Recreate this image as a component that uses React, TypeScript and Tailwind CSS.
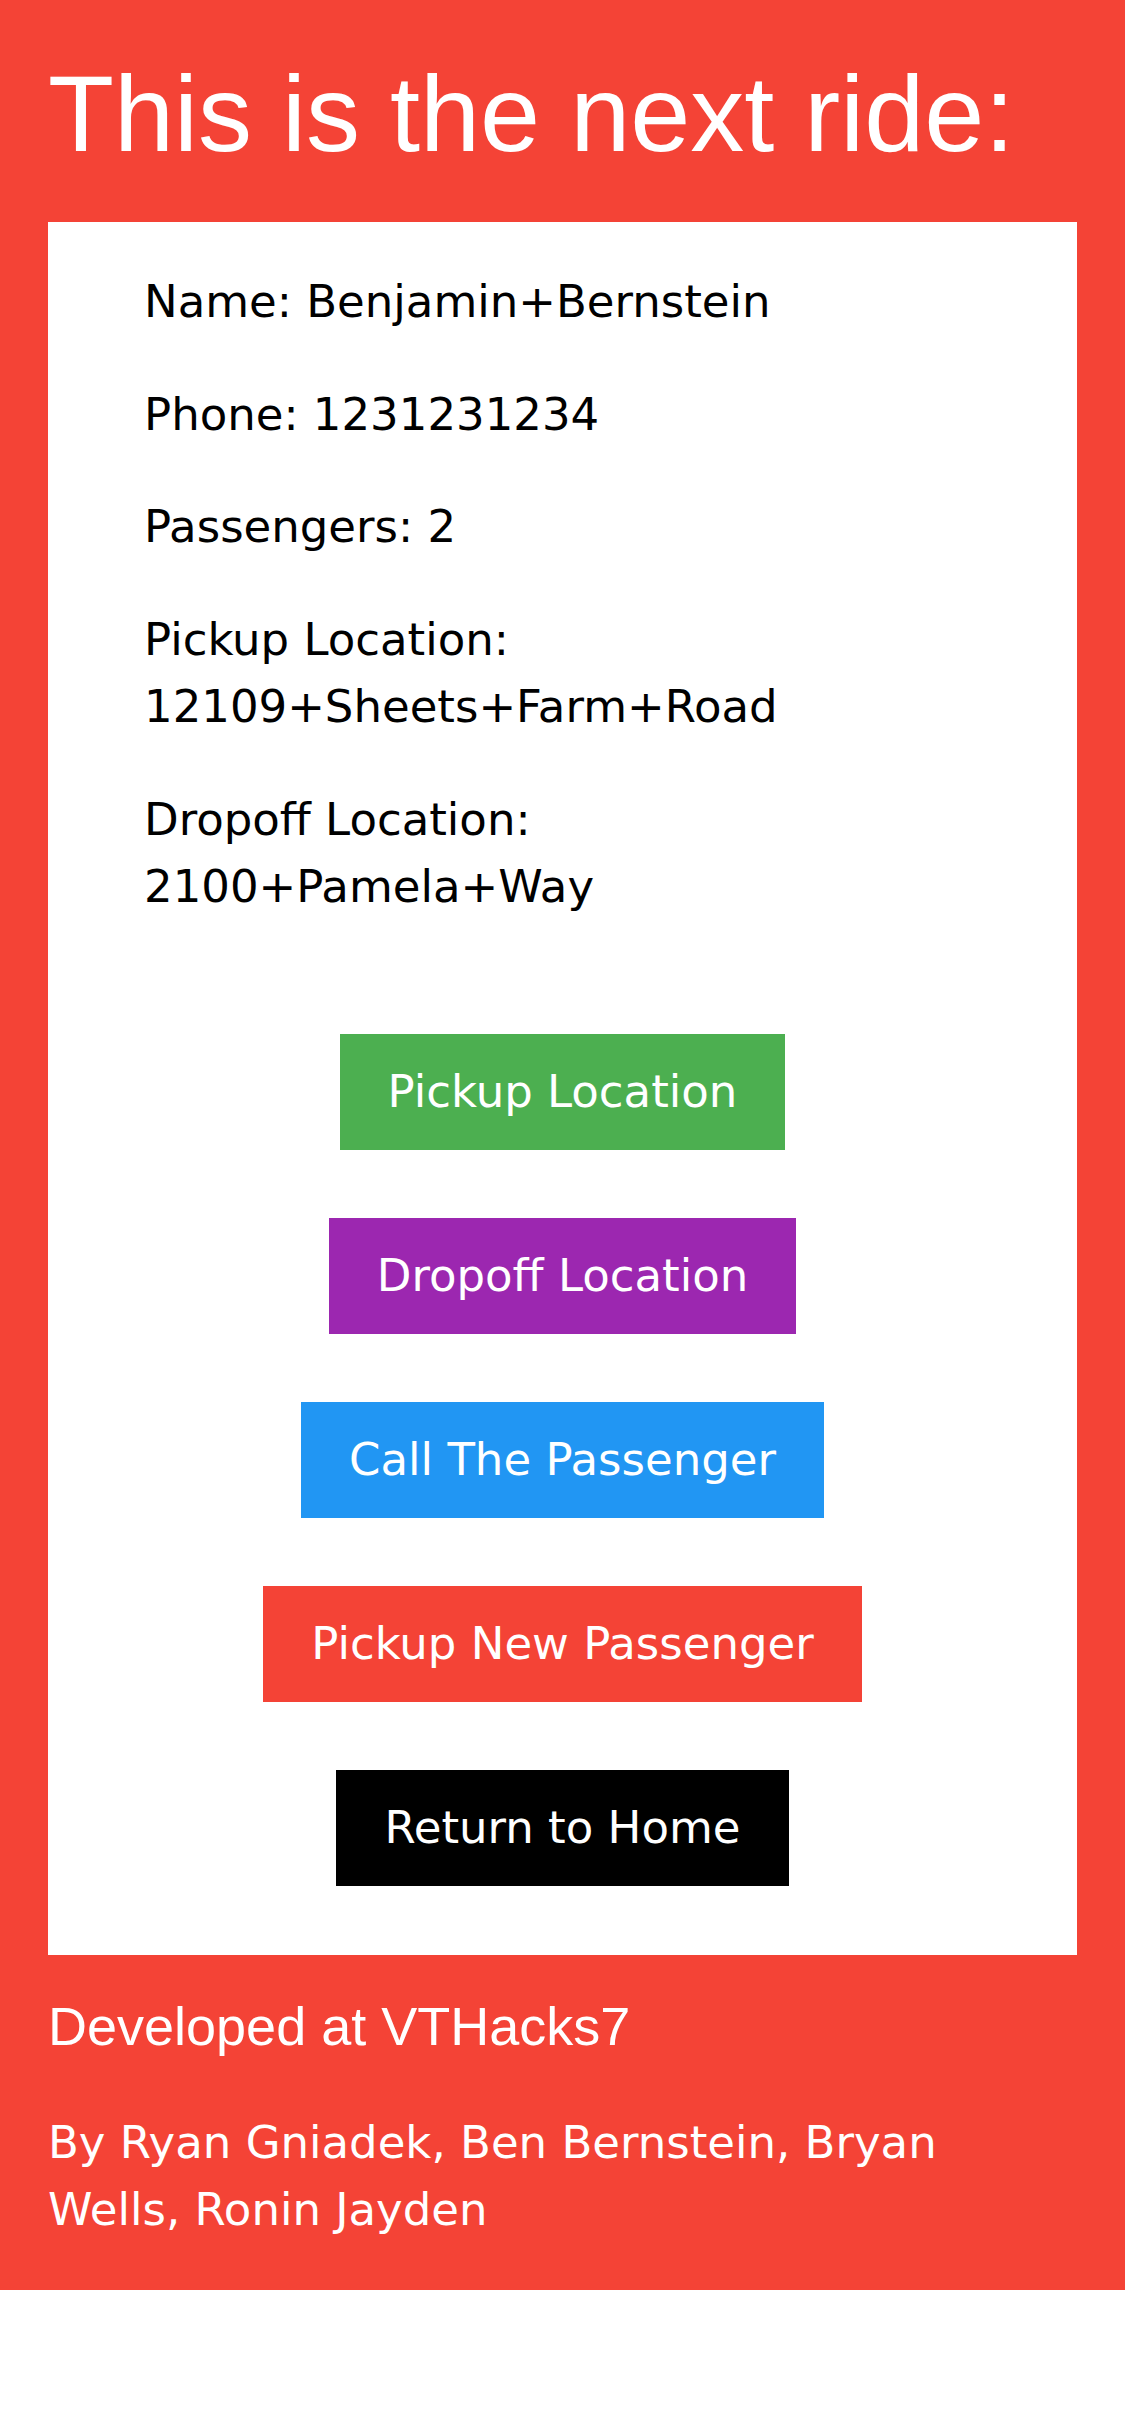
export default function App() {
  const dejavu = "font-['DejaVu_Sans',Verdana,sans-serif]";
  const lib = "font-['Liberation_Sans',Arial,sans-serif]";
  const btn =
    "flex h-[116px] items-center justify-center px-[48px] text-white text-[45px] leading-[52px] " +
    dejavu;
  return (
    <div className="min-h-[2436px] bg-white">
      <div className="bg-[#f44336] px-[48px] pt-[52px] pb-[46px]">
        <h1 className={`text-[108px] leading-[124px] text-white font-normal ${lib}`}>
          This is the next ride:
        </h1>
        <div className="mt-[46px] bg-white pt-[46px] pb-[69px]">
          <div
            className={`flex flex-col gap-[45px] pl-[96px] pr-[40px] text-black text-[45px] leading-[67.5px] ${dejavu}`}
          >
            <p>Name: Benjamin+Bernstein</p>
            <p>Phone: 1231231234</p>
            <p>Passengers: 2</p>
            <p>
              Pickup Location:
              <br />
              12109+Sheets+Farm+Road
            </p>
            <p>
              Dropoff Location:
              <br />
              2100+Pamela+Way
            </p>
          </div>
          <div className="mt-[113px] flex flex-col items-center gap-[68px]">
            <button className={`${btn} bg-[#4caf50]`}>Pickup Location</button>
            <button className={`${btn} bg-[#9c27b0]`}>Dropoff Location</button>
            <button className={`${btn} bg-[#2196f3]`}>Call The Passenger</button>
            <button className={`${btn} bg-[#f44336]`}>Pickup New Passenger</button>
            <button className={`${btn} bg-black`}>Return to Home</button>
          </div>
        </div>
        <p className={`mt-[40px] text-[54px] leading-[62px] text-white ${lib}`}>
          Developed at VTHacks7
        </p>
        <p className={`mt-[52px] text-[45px] leading-[67.5px] text-white ${dejavu}`}>
          By Ryan Gniadek, Ben Bernstein, Bryan
          <br />
          Wells, Ronin Jayden
        </p>
      </div>
    </div>
  );
}
